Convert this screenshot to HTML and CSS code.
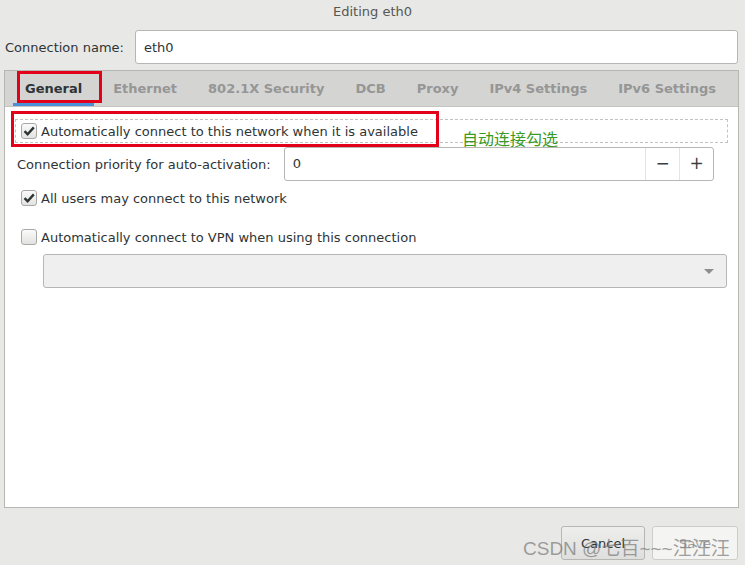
FILE: index.html
```html
<!DOCTYPE html>
<html lang="en">
<head>
    <meta charset="UTF-8">
    <title>Editing eth0</title>
    <link rel="stylesheet" href="styles.css">
</head>
<body>
    <div class="window">
        <div class="titlebar">Editing eth0</div>

        <div class="name-row">
            <label for="conn-name">Connection name:</label>
            <input type="text" id="conn-name" class="entry" value="eth0">
        </div>

        <div class="notebook">
            <div class="tabs">
                <div class="tab active">General</div>
                <div class="tab">Ethernet</div>
                <div class="tab">802.1X Security</div>
                <div class="tab">DCB</div>
                <div class="tab">Proxy</div>
                <div class="tab">IPv4 Settings</div>
                <div class="tab">IPv6 Settings</div>
            </div>

            <div class="page">
                <!-- auto connect -->
                <div class="check-row focused">
                    <span class="check checked"></span>
                    <span>Automatically connect to this network when it is available</span>
                </div>

                <div class="priority-row">
                    <span class="label">Connection priority for auto-activation:</span>
                    <div class="spin">
                        <span class="spin-value">0</span>
                        <span class="spin-btn">&minus;</span>
                        <span class="spin-btn">+</span>
                    </div>
                </div>

                <div class="check-row users">
                    <span class="check checked"></span>
                    <span>All users may connect to this network</span>
                </div>

                <div class="check-row vpn">
                    <span class="check"></span>
                    <span>Automatically connect to VPN when using this connection</span>
                </div>

                <div class="combo">
                    <span class="arrow"></span>
                </div>
            </div>
        </div>

        <div class="footer">
            <button class="btn">Cancel</button>
            <button class="btn disabled">Save</button>
        </div>

        <!-- annotations drawn over the screenshot -->
        <div class="mark mark-tab"></div>
        <div class="mark mark-auto"></div>
        <div class="note">自动连接勾选</div>
        <div class="watermark">CSDN @七百~~~汪汪汪</div>
    </div>
</body>
</html>
```

FILE: styles.css
```css
body{
    margin: 0;
    background: #e8e8e7;
    font-family: "DejaVu Sans", sans-serif;
    font-size: 13px;
    color: #2e3436;
}
.window{
    position: relative;
    width: 745px;
    height: 565px;
    overflow: hidden;
}
.titlebar{
    height: 24px;
    line-height: 23px;
    text-align: center;
    color: #555753;
}
.name-row{
    display: flex;
    align-items: center;
    gap: 11px;
    padding: 6px 7px 0 5px;
}
.entry{
    flex: 1;
    height: 34px;
    box-sizing: border-box;
    border: 1px solid #b6b6b3;
    border-radius: 3px;
    background: #fff;
    padding: 0 8px;
    font: inherit;
    color: #2e3436;
    outline: none;
}
.notebook{
    margin: 6px 6px 0 4px;
    border: 1px solid #b6b6b3;
    background: #fff;
}
.tabs{
    display: flex;
    gap: 7px;
    height: 35px;
    padding-left: 8px;
    background: #d4d4d2;
    border-bottom: 1px solid #c4c4c2;
}
.tab{
    padding: 3px 12px 0 12px;
    line-height: 29px;
    font-weight: bold;
    color: #959695;
    border-bottom: 3px solid transparent;
}
.tab.active{
    color: #2e3436;
    border-bottom-color: #4a90d9;
}
.page{
    height: 388px;
    padding: 12px 10px 0 10px;
}
.check-row{
    display: flex;
    align-items: center;
    gap: 4px;
    height: 22px;
    padding-left: 5px;
    border: 1px solid transparent;
}
.check-row.focused{
    border: 1px dashed #c2c2c0;
}
.check{
    width: 16px;
    height: 16px;
    box-sizing: border-box;
    border: 1px solid #a8a8a6;
    border-radius: 3px;
    background: linear-gradient(#fafafa, #e2e2e0);
}
.check.checked{
    background: url("data:image/svg+xml;utf8,<svg xmlns='http://www.w3.org/2000/svg' width='14' height='14' viewBox='0 0 14 14'><path d='M2.5 7.2 L5.6 10.2 L11.8 3.4' fill='none' stroke='%232e3436' stroke-width='2.4'/></svg>") center/14px no-repeat, linear-gradient(#fafafa, #e2e2e0);
}
.priority-row{
    display: flex;
    align-items: center;
    gap: 13px;
    margin: 4px 14px 0 2px;
}
.spin{
    flex: 1;
    display: flex;
    height: 34px;
    box-sizing: border-box;
    border: 1px solid #b6b6b3;
    border-radius: 3px;
}
.spin-value{
    flex: 1;
    line-height: 32px;
    padding-left: 8px;
}
.spin-btn{
    width: 33px;
    border-left: 1px solid #e4e4e2;
    text-align: center;
    line-height: 31px;
    font-size: 17px;
    color: #3b3f40;
}
.check-row.users{
    margin-top: 5px;
}
.check-row.vpn{
    margin-top: 15px;
}
.combo{
    position: relative;
    height: 34px;
    box-sizing: border-box;
    margin: 5px 1px 0 28px;
    border: 1px solid #b6b6b3;
    border-radius: 3px;
    background: #efefef;
}
.arrow{
    position: absolute;
    right: 12px;
    top: 14px;
    border-left: 5px solid transparent;
    border-right: 5px solid transparent;
    border-top: 5px solid #8e8e8c;
}
.footer{
    display: flex;
    justify-content: flex-end;
    gap: 7px;
    padding: 18px 7px 0 0;
}
.btn{
    width: 84px;
    height: 34px;
    border: 1px solid #b6b6b3;
    border-radius: 3px;
    background: linear-gradient(#eeeeec, #dededc);
    font: inherit;
    color: #2e3436;
}
.btn.disabled{
    width: 86px;
    background: #f4f4f2;
    border-color: #cdcdcb;
    color: #a4a4a2;
}
.mark{
    position: absolute;
    border: 3px solid #e2001a;
    box-sizing: border-box;
}
.mark-tab{
    left: 17px;
    top: 71px;
    width: 85px;
    height: 32px;
}
.mark-auto{
    left: 11px;
    top: 111px;
    width: 428px;
    height: 36px;
}
.note{
    position: absolute;
    left: 462px;
    top: 126px;
    font-family: "Noto Sans CJK SC", sans-serif;
    font-size: 16px;
    color: #3a9a22;
}
.watermark{
    position: absolute;
    left: 523px;
    top: 533px;
    font-family: "Liberation Sans", "Noto Sans CJK SC", sans-serif;
    font-size: 19px;
    color: rgba(120, 120, 120, 0.7);
    white-space: nowrap;
}
```
